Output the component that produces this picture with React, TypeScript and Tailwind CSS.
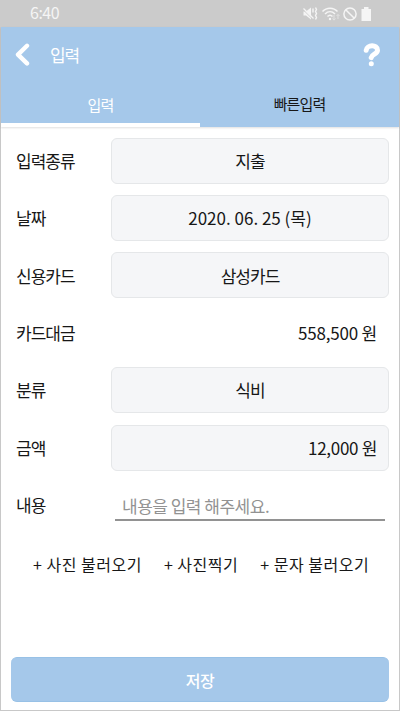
const rows = [
    { label: "입력종류", value: "지출", kind: "select" },
    { label: "날짜", value: "2020. 06. 25 (목)", kind: "date" },
    { label: "신용카드", value: "삼성카드", kind: "select" },
    { label: "카드대금", value: "558,500 원", kind: "text" },
    { label: "분류", value: "식비", kind: "select" },
    { label: "금액", value: "12,000 원", kind: "amount" },
];

const boxStyles: Record<string, string> = {
    select: "justify-center rounded-md border border-[#e5e7e9] bg-[#f5f6f8] tracking-[-1px]",
    date: "justify-center rounded-md border border-[#e5e7e9] bg-[#f5f6f8]",
    amount: "justify-end rounded-md border border-[#e5e7e9] bg-[#f5f6f8] pr-[11px] tracking-[-0.3px]",
    text: "justify-end pr-3 tracking-[-0.2px]",
};

function StatusBar() {
    return (
        <div className="flex h-[27px] shrink-0 items-center justify-between bg-[#cbcbcb] pl-[30px] pr-[28px] text-[#f5f5f5]">
            <span className="pb-[3px] text-[16px] leading-none tracking-[-0.5px]">6:40</span>
            <svg width="70" height="16" viewBox="0 0 70 16" fill="none" stroke="#f5f5f5">
                {/* Vibrate */}
                <path d="M1.5 5.5h2.5l5-4v12l-5-4H1.5z" fill="#f5f5f5" stroke="none" />
                <path d="M1 3.5l10 10" stroke="#cbcbcb" />
                <path d="M1.5 2.5l10 10" strokeWidth="1.2" />
                <path d="M11 2.5v4M13.5 1.5l1 2-1 2 1 2-1 2 1 2-1 2" strokeWidth="1.4" />
                {/* Wifi */}
                <path d="M20.5 5.5c4-4.5 11-4.5 15 0M23 8c3-3 7-3 10 0M25.5 10.5c1.5-1.5 3.5-1.5 5 0" strokeWidth="1.5" />
                <circle cx="28" cy="13" r="1.2" fill="#f5f5f5" stroke="none" />
                <path d="M32 9v5M30.500 12.500l1.500 1.700 1.500-1.700M36 13V8.500M34.500 10L36 8.500l1.500 1.500" stroke="#e2e2e2" />
                {/* Blocked */}
                <circle cx="48" cy="8" r="6.1" strokeWidth="1.5" />
                <path d="M43.7 3.7l8.6 8.6" strokeWidth="1.5" />
                {/* Battery */}
                <path d="M59.500 3H62V1h4.500v2H69v12h-9.500z" fill="#f5f5f5" stroke="none" />
            </svg>
        </div>
    );
}

export default function App() {
    return (
        <div className="flex h-[711px] w-[400px] flex-col overflow-hidden bg-[#c8c8c8] font-['Noto_Sans_CJK_KR',sans-serif] text-[17px] text-[#171717]">
            <StatusBar />

            <div className="mx-px mb-px flex flex-1 flex-col bg-white">
                {/* Header */}
                <header className="h-[100px] bg-[#a5c8ea] text-white shadow-[0_1px_2px_rgba(0,0,0,0.13)]">
                    <div className="flex h-14 items-center pl-[13px] pr-[18px]">
                        <svg width="17" height="24" viewBox="0 0 17 24" fill="none" stroke="currentColor" strokeWidth="4.4" strokeLinecap="round" strokeLinejoin="round">
                            <path d="M13 2.8L4 11.6 13 20.4" />
                        </svg>
                        <h1 className="ml-[19px] flex-1 pb-px text-[17px] leading-none tracking-[-1.2px]">입력</h1>
                        <svg width="18" height="24" viewBox="0 0 18 24" fill="none" stroke="currentColor" strokeLinecap="round">
                            <path d="M3.2 7.3C3.8 1.5 14.5 1.3 14.5 7.2c0 3.9-5.5 3.8-6.3 7.4" strokeWidth="5" />
                            <circle cx="8.3" cy="20.7" r="2.5" fill="currentColor" stroke="none" />
                        </svg>
                    </div>
                    <nav className="flex h-11">
                        <button className="flex w-[199px] items-center justify-center border-b-4 border-white pt-1 text-[15px] tracking-[-0.9px]">입력</button>
                        <button className="flex flex-1 items-center justify-center pb-0.5 pt-px text-[15px] tracking-[-0.9px] text-[#171717]">빠른입력</button>
                    </nav>
                </header>

                {/* Form */}
                <main className="flex flex-1 flex-col pb-2 pl-[15px] pr-[10px] pt-[10.7px]">
                    <div className="flex flex-col gap-[11.38px]">
                        {rows.map((row) => (
                            <div key={row.label} className="flex h-[46px] items-center">
                                <span className="w-[95px] tracking-[-1px]">{row.label}</span>
                                <div className={`flex h-full flex-1 items-center ${boxStyles[row.kind]}`}>{row.value}</div>
                            </div>
                        ))}
                    </div>

                    <div className="mt-[17px] flex h-[33px] items-center">
                        <span className="w-[99px] pt-px tracking-[-1px]">내용</span>
                        <input
                            className="mr-1 h-full min-w-0 flex-1 border-b-2 border-[#929292] pl-[7px] pt-1 tracking-[-0.5px] outline-none placeholder:text-[#929292]"
                            placeholder="내용을 입력 해주세요."
                        />
                    </div>

                    <div className="mt-[31px] flex gap-[22px] whitespace-nowrap pl-[17px] text-[16px] tracking-[0.5px]">
                        <button>+ 사진 불러오기</button>
                        <button>+ 사진찍기</button>
                        <button>+ 문자 불러오기</button>
                    </div>

                    <button className="-ml-[5px] mt-auto h-[45px] rounded-md border-y border-[#98c1e6] bg-[#a5c8ea] text-[16px] font-medium tracking-[-0.5px] text-white">저장</button>
                </main>
            </div>
        </div>
    );
}
